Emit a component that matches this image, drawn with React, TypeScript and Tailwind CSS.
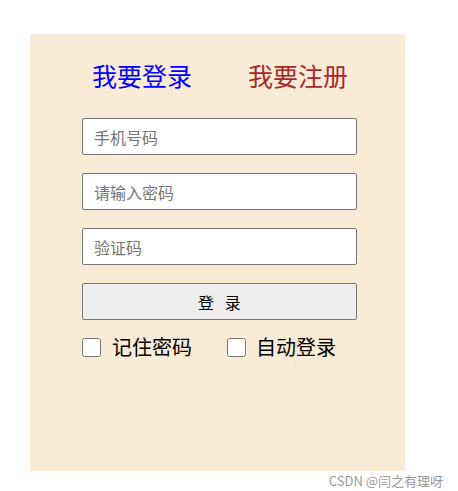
const inputCls =
  'block w-[275px] h-[37px] border border-[#767676] rounded-[2px] bg-white px-[11px] text-[16px] text-black placeholder:text-[#757575] outline-none';

const App = () => {
  return (
    <div
      className="w-[458px] h-[491px] bg-white overflow-hidden"
      style={{ fontFamily: '"Noto Sans CJK SC", "Microsoft YaHei", sans-serif' }}
    >
      <div className="ml-[30px] mt-[34px] w-[375px] h-[437px] bg-[#FAEBD7]">
        <div className="flex pl-[62px] pt-[26px] gap-[56px] text-[25px] leading-[30px]">
          <span className="text-[#0000FF]">我要登录</span>
          <span className="text-[#A52A2A]">我要注册</span>
        </div>
        <form className="ml-[52px] mt-[28px] flex flex-col gap-[18px]">
          <input className={inputCls} placeholder="手机号码" />
          <input className={inputCls} type="password" placeholder="请输入密码" />
          <input className={inputCls} placeholder="验证码" />
          <button
            type="button"
            className="w-[275px] h-[37px] border border-[#767676] rounded-[2px] bg-[#EFEFEF] text-[16px] text-black"
          >
            登&nbsp;&nbsp;&nbsp;录
          </button>
        </form>
        <div className="ml-[52px] mt-[15px] flex items-center text-[20px] leading-[24px] text-black">
          <label className="flex items-center">
            <input type="checkbox" className="w-[19px] h-[19px] m-0" />
            <span className="ml-[11px]">记住密码</span>
          </label>
          <label className="flex items-center ml-[35px]">
            <input type="checkbox" className="w-[19px] h-[19px] m-0" />
            <span className="ml-[10px]">自动登录</span>
          </label>
        </div>
      </div>
      <div className="mt-[2px] pr-[15px] text-right text-[13px] leading-[16px] text-[#999999]">
        CSDN @闫之有理呀
      </div>
    </div>
  );
};

export default App;
